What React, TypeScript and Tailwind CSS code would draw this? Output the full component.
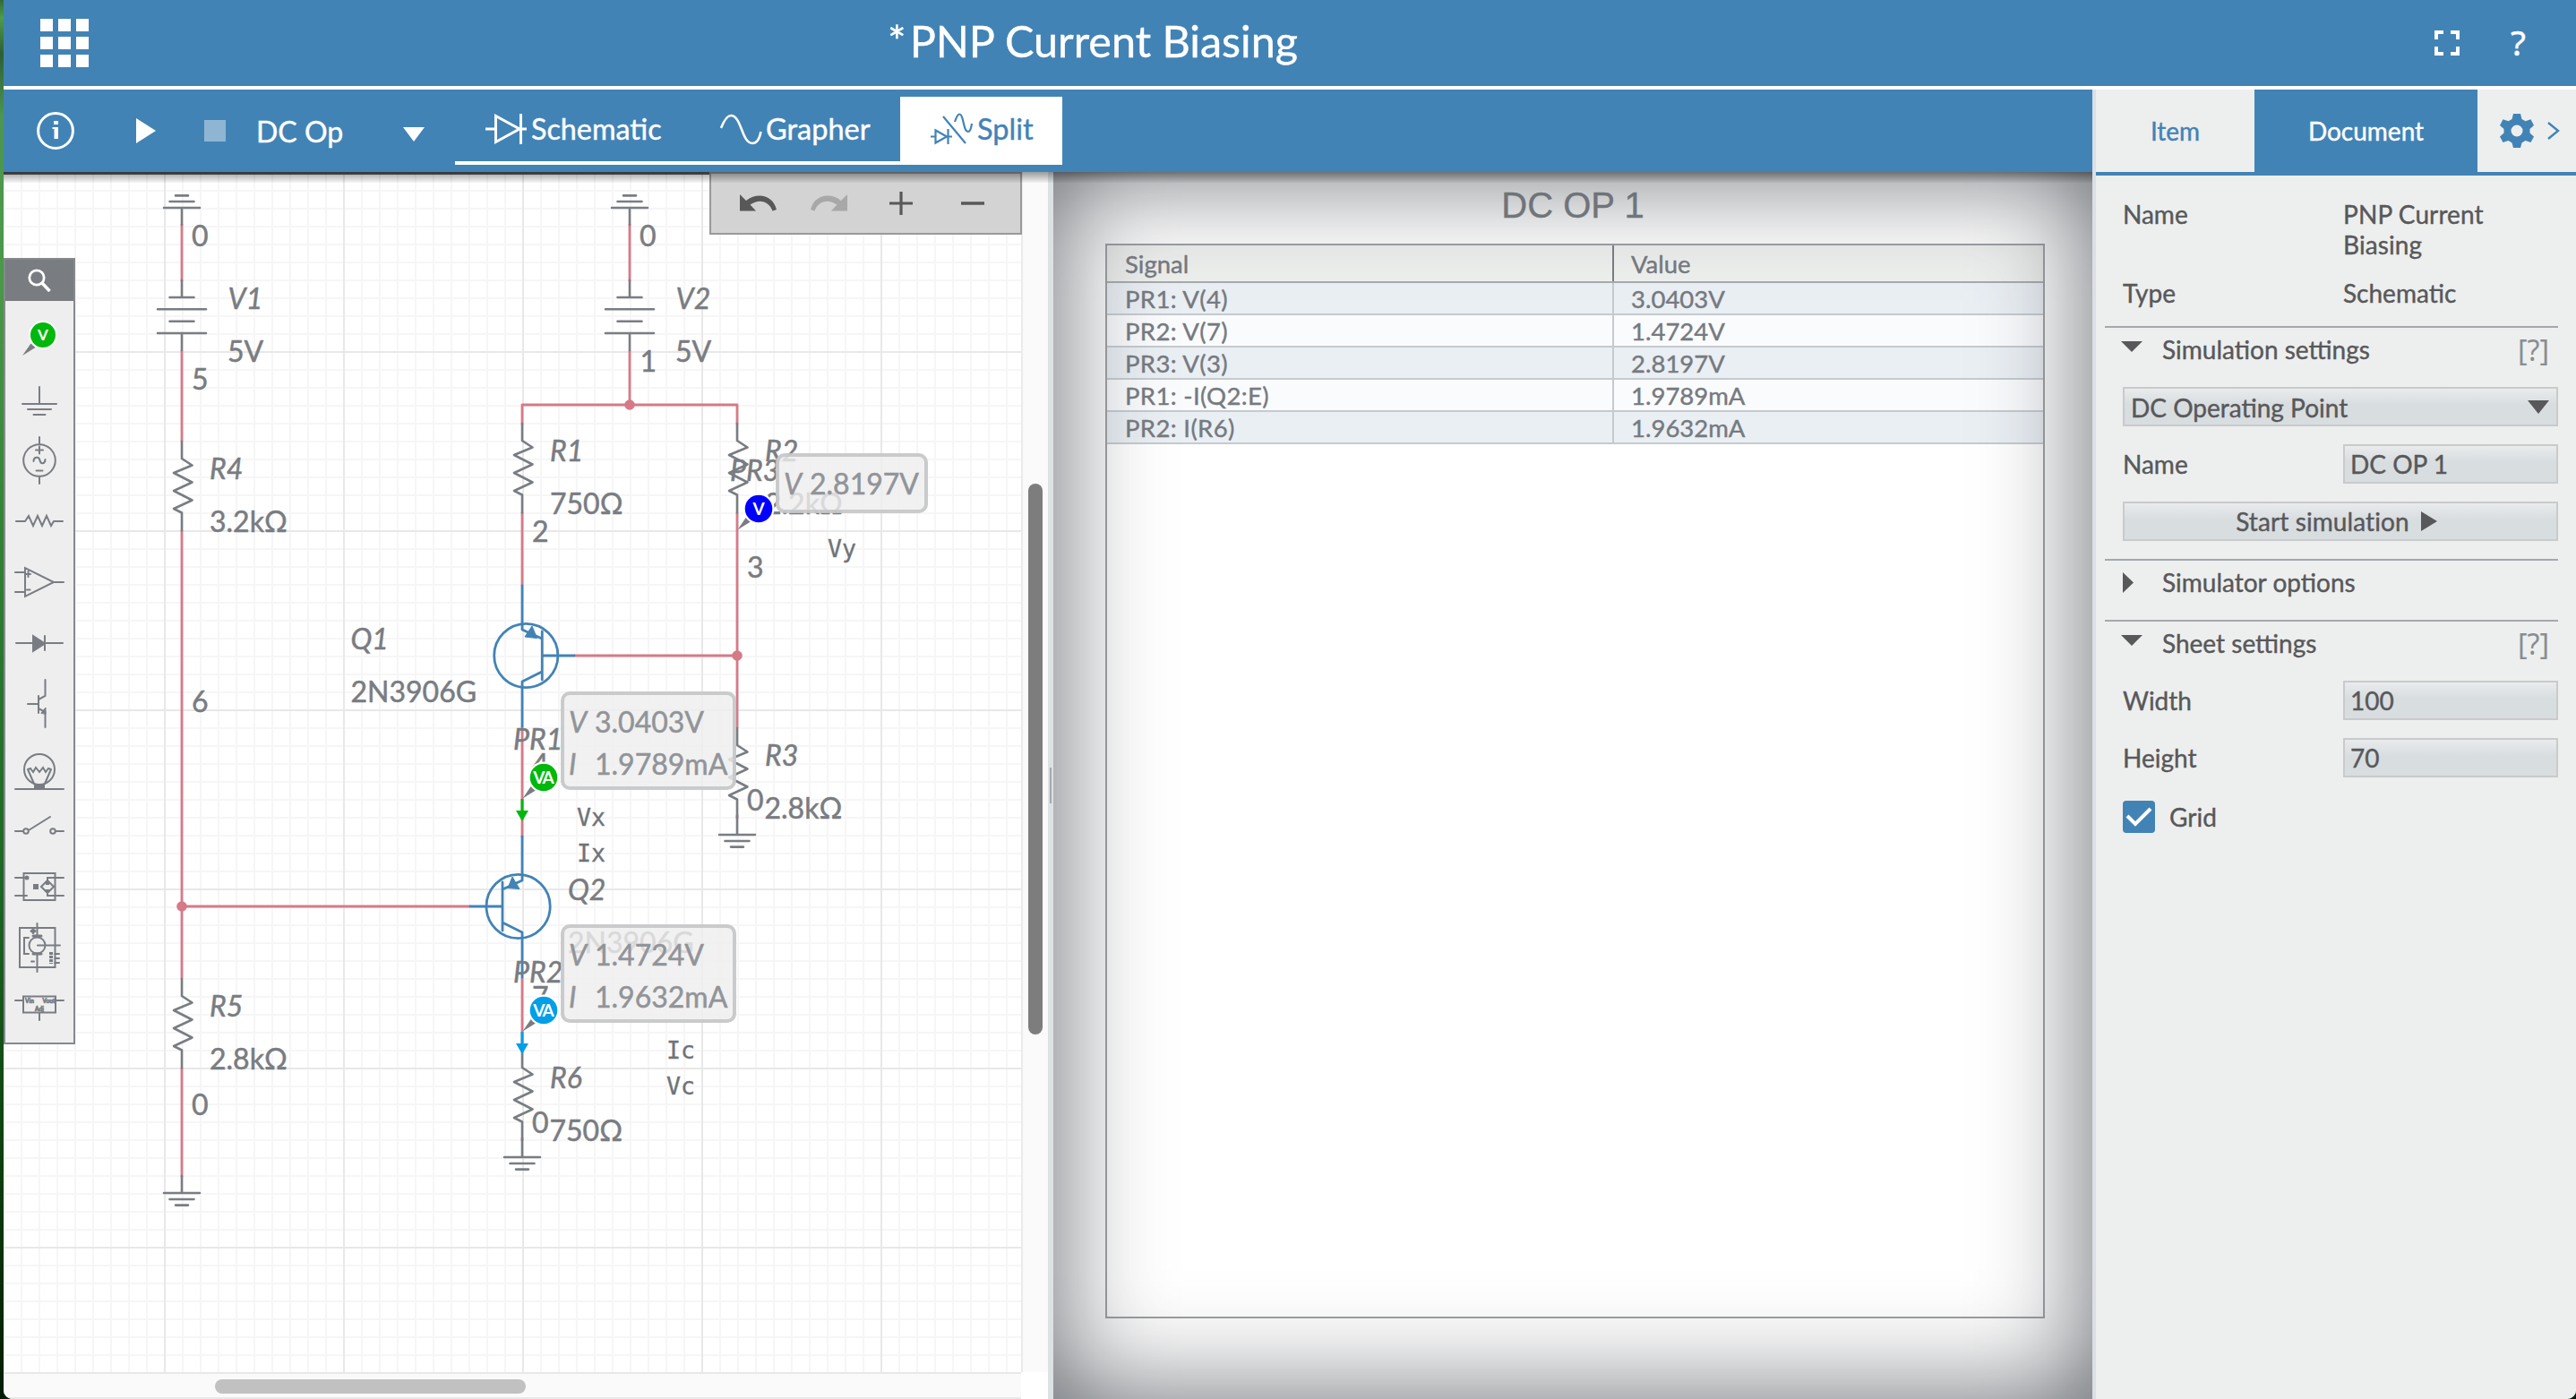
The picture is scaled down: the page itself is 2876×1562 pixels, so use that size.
import React from "react";

const WIRE = "#d67a87";
const PART = "#797d83";
const BLUE = "#4283b6";
const LATO = "Lato, sans-serif";

const Line = ({ d, c = PART, w = 2.6 }: { d: string; c?: string; w?: number }) => (
  <path d={d} stroke={c} strokeWidth={w} fill="none" strokeLinecap="round" strokeLinejoin="round" />
);

const Wire = ({ d }: { d: string }) => (
  <path d={d} stroke={WIRE} strokeWidth={2.8} fill="none" strokeLinejoin="round" />
);

const Resistor = ({ x, y }: { x: number; y: number }) => (
  <Line
    d={`M${x} ${y}v19l11.5 7.5l-20.5 8.5l20.5 10.5l-20.5 9.5l20.5 10.5l-20.5 9.5l9 4.5v20`}
  />
);

const Ground = ({ x, y, up = false }: { x: number; y: number; up?: boolean }) => {
  const s = up ? -1 : 1;
  return (
    <Line
      d={`M${x} ${y}v${s * 19}M${x - 20} ${y + s * 19}h40M${x - 13.5} ${y + s * 26}h27M${x - 7} ${y + s * 32.6}h14`}
    />
  );
};

const Battery = ({ x }: { x: number }) => (
  <Line
    d={`M${x} 313v19M${x - 13.5} 332h27M${x - 27} 345.3h54M${x - 13.5} 358.7h27M${x - 27} 372h54M${x} 372v19`}
  />
);

const Label = ({
  x,
  y,
  t,
  i = false,
  c = "#797c81",
}: {
  x: number;
  y: number;
  t: string;
  i?: boolean;
  c?: string;
}) => (
  <text
    x={x}
    y={y}
    fill={c}
    stroke={c}
    strokeWidth={0.5}
    className="[font-kerning:none]"
    fontFamily={LATO}
    fontSize={32}
    fontStyle={i ? "italic" : "normal"}
  >
    {t}
  </text>
);

const Note = ({ x, y, t }: { x: number; y: number; t: string }) => (
  <text x={x} y={y} fill="#6f7378" stroke="#6f7378" strokeWidth={0.3} fontFamily="'DejaVu Sans Mono', monospace" fontSize={26.6}>
    {t}
  </text>
);

const Probe = ({ x, y, c, t }: { x: number; y: number; c: string; t: string }) => (
  <g>
    <path d={`M${x - 23.5} ${y + 23.5}l9.5 -14l5 5z`} fill="#797d83" />
    <circle cx={x} cy={y} r={17.5} fill="#fff" />
    <circle cx={x} cy={y} r={15.3} fill={c} />
    <text
      x={t.length > 1 ? x - 1 : x}
      y={y + 7}
      fill="#fff"
      fontFamily={LATO}
      fontWeight={700}
      fontSize={19}
      textAnchor="middle"
      letterSpacing={t.length > 1 ? -2 : 0}
    >
      {t}
    </text>
  </g>
);

const Readout = ({ x, y, w, h, rows }: { x: number; y: number; w: number; h: number; rows: [string, string, number][] }) => (
  <g>
    <rect x={x + 2} y={y + 2} width={w - 4} height={h - 4} rx={8} fill="#eeeeee" fillOpacity={0.82} stroke="#c6c7c8" strokeOpacity={0.92} strokeWidth={4} />
    {rows.map(([k, v, dx], n) => (
      <g key={k}>
        <Label x={x + 9} y={y + 46 + n * 47} t={k} i c="#919498" />
        <Label x={x + dx} y={y + 46 + n * 47} t={v} c="#919498" />
      </g>
    ))}
  </g>
);

const Schematic = () => (
  <svg className="block" width={1136} height={1340} viewBox="4 192 1136 1340">
    <defs>
      <pattern id="minor" x="3" y="12" width="20" height="20" patternUnits="userSpaceOnUse">
        <path d="M0 0h20v2h-18v18h-2z" fill="#f6f6f6" />
      </pattern>
      <pattern id="major" x="183" y="192" width="200" height="200" patternUnits="userSpaceOnUse">
        <path d="M0 0h200v2h-198v198h-2z" fill="#e8e8e8" />
      </pattern>
    </defs>
    <rect x={4} y={192} width={1136} height={1340} fill="url(#minor)" />
    <rect x={4} y={192} width={1136} height={1340} fill="url(#major)" />

    <Wire d="M203 250v64M203 391v102M203 592v501M203 1192v122M203 1012H525" />
    <Wire d="M703 250v64M703 391v61M583 474V452H823V474M583 572v82M823 572v241M641 732H823" />
    <Wire d="M583 811v124M583 1091v82M823 910v4M583 1270v4" />
    <circle cx={203} cy={1012} r={5.8} fill={WIRE} />
    <circle cx={703} cy={452} r={5.8} fill={WIRE} />
    <circle cx={823} cy={732} r={5.8} fill={WIRE} />

    <Ground x={203} y={251} up />
    <Ground x={703} y={251} up />
    <Battery x={203} />
    <Battery x={703} />
    <Resistor x={203} y={493} />
    <Resistor x={203} y={1093} />
    <Resistor x={583} y={473} />
    <Resistor x={823} y={473} />
    <Resistor x={823} y={813} />
    <Resistor x={583} y={1173} />
    <Ground x={203} y={1313} />
    <Ground x={823} y={913} />
    <Ground x={583} y={1273} />

    <g>
      <circle cx={587.3} cy={732} r={35.6} stroke={BLUE} strokeWidth={2.8} fill="none" />
      <Line c={BLUE} w={2.8} d="M583 654V703L605 713M605.3 705V759M605.3 732H641M605 750L583 761V811" />
      <path d="M594 699L586 711L599.5 712.5z" fill={BLUE} stroke={BLUE} />
      <circle cx={578.6} cy={1012} r={35.6} stroke={BLUE} strokeWidth={2.8} fill="none" />
      <Line c={BLUE} w={2.8} d="M583 934V983L561 993M561 985V1039M561 1012H525M561 1030L583 1041V1091" />
      <path d="M572 979L567 991.5L580 992.5z" fill={BLUE} stroke={BLUE} />
    </g>

    <path d="M583 892v15" stroke="#00b80d" strokeWidth={3} />
    <path d="M576 905h14l-7 12z" fill="#00b80d" />
    <path d="M583 1152v15" stroke="#009fe8" strokeWidth={3} />
    <path d="M576 1165h14l-7 12z" fill="#009fe8" />

    <Label x={214} y={274.5} t="0" />
    <Label x={254.5} y={345} t="V1" i />
    <Label x={254} y={404} t="5V" />
    <Label x={214} y={434.5} t="5" />
    <Label x={234} y={535} t="R4" i />
    <Label x={234} y={594} t="3.2kΩ" />
    <Label x={214} y={795} t="6" />
    <Label x={234} y={1134.5} t="R5" i />
    <Label x={234} y={1194} t="2.8kΩ" />
    <Label x={214} y={1244.5} t="0" />
    <Label x={714} y={274.5} t="0" />
    <Label x={754.5} y={345} t="V2" i />
    <Label x={754} y={404} t="5V" />
    <Label x={714.5} y={414.5} t="1" />
    <Label x={614} y={515} t="R1" i />
    <Label x={614} y={574} t="750Ω" />
    <Label x={594} y={605} t="2" />
    <Label x={854} y={515} t="R2" i />
    <Label x={854} y={574} t="2.2kΩ" />
    <Label x={815} y={537} t="PR3" i />
    <Label x={834} y={645} t="3" />
    <Label x={391.5} y={725} t="Q1" i />
    <Label x={391.5} y={784} t="2N3906G" />
    <Label x={573} y={837} t="PR1" i />
    <Label x={594} y={865} t="4" />
    <Label x={634} y={1005} t="Q2" i />
    <Label x={634} y={1064} t="2N3906G" />
    <Label x={573} y={1097} t="PR2" i />
    <Label x={594} y={1125} t="7" />
    <Label x={854} y={855} t="R3" i />
    <Label x={853.5} y={914} t="2.8kΩ" />
    <Label x={834} y={905} t="0" />
    <Label x={614} y={1215} t="R6" i />
    <Label x={613.5} y={1274} t="750Ω" />
    <Label x={594} y={1265} t="0" />
    <Note x={924} y={621.5} t="Vy" />
    <Note x={644} y={922} t="Vx" />
    <Note x={644} y={962} t="Ix" />
    <Note x={744} y={1182} t="Ic" />
    <Note x={744} y={1222} t="Vc" />

    <Probe x={607} y={868} c="#00b80d" t="VA" />
    <Probe x={607} y={1128} c="#009fe8" t="VA" />
    <Probe x={847} y={568} c="#0000ff" t="V" />
    <Readout x={626} y={772} w={196} h={110} rows={[["V", "3.0403V", 38], ["I", "1.9789mA", 38]]} />
    <Readout x={626} y={1032} w={196} h={110} rows={[["V", "1.4724V", 38], ["I", "1.9632mA", 38]]} />
    <Readout x={866} y={506} w={170} h={67} rows={[["V", "2.8197V", 38]]} />
  </svg>
);

/* Component palette drawings, one strip below the search header */
const Palette = () => (
  <svg width={76} height={828} viewBox="6 336 76 828" fill="none" stroke="#797d83" strokeWidth={2} strokeLinecap="round">
    <path d="M25 397l9.500 -13.500l5 4.500z" fill="#797d83" stroke="none" />
    <circle cx={48} cy={374} r={16} fill="#fff" stroke="none" />
    <circle cx={48} cy={374} r={14} fill="#00b80d" stroke="none" />
    <text x={48} y={380} fill="#fff" stroke="none" fontFamily={LATO} fontWeight={700} fontSize={17} textAnchor="middle">V</text>
    <path d="M44 432v18M25 451h38M31 457h26M37.500 463h13" />
    <circle cx={44} cy={514} r={17.800} />
    <path d="M44 488v8M44 532v8M44 498.500v8M40 502.500h8M40.500 525.500h7M37.500 515c0-5 6-6 7-1s6 4 6-1" />
    <path d="M18 582h10l4-6l5 11l5-11l5 11l5-11l5 11l3-5h10" />
    <path d="M28 634v32l32-16zM17 639h11M17 661h11M60 650h11M31.500 638v6M29 641h5M30 658.500h3.500" />
    <path d="M18 718h52M50 710v16" />
    <path d="M37 710v17l13-8.500z" fill="#797d83" />
    <path d="M31 786h12M43 777v19M43 781l7.500-4V759M43 791l7.500 4V812" />
    <path d="M46 796l5-6v7z" fill="#797d83" strokeWidth={1} />
    <circle cx={44} cy={859} r={17} />
    <path d="M17 881h54M31 859l7 16M57 859l-7 16M31 859l3-1l3 4l3-5l4 5l4-5l3 5l3-4l3 1" />
    <path d="M38 875h12v6h-12z" fill="#797d83" stroke="none" />
    <path d="M17 928h9M32 927l24-15M62 928h9" />
    <circle cx={29} cy={928} r={2.800} />
    <circle cx={59} cy={928} r={2.800} />
    <path d="M26.500 975h35v30h-35zM17 980h13M17 1000h13M71 980H53v4M71 1000H53v-4M53 983l7 7l-7 7l-7-7z" />
    <path d="M37 987h6v6h-6zM51 984h4v4h-4zM50 993h6v2h-6z" fill="#797d83" stroke="none" />
    <circle cx={30} cy={980} r={1.500} fill="#797d83" />
    <path d="M22 1036h39.500v44H22zM41.500 1031v14M41.500 1066v19M42 1055.500h25M32 1047h-5v18h5M61 1065h5M61 1070h5M61 1075h5M35 1073.500h3" />
    <circle cx={41.500} cy={1055.500} r={9} />
    <path d="M37 1045h9M37 1065h9M35 1039.500h4M37 1037.500v4" strokeWidth={3} />
    <path d="M57 1063v13" strokeWidth={4} strokeDasharray="3 1" strokeLinecap="butt" />
    <path d="M26 1112.500h36v18H26zM17 1117h9M62 1117h9M44 1131v8" />
    <g fill="#797d83" strokeWidth={0.7} fontFamily={LATO} fontWeight={700} fontSize={6.500}>
      <text x={28} y={1120}>Vin</text>
      <text x={47.500} y={1120}>Vout</text>
      <text x={39} y={1128.500}>Adj</text>
    </g>
  </svg>
);

const Field = ({ children, className = "" }: { children?: React.ReactNode; className?: string }) => (
  <div
    className={`flex h-[44px] items-center border-2 border-[#c9cacb] bg-[linear-gradient(180deg,#e9ebec_0%,#d8dde0_45%,#d8dde0_100%)] pl-[7px] pr-[8px] ${className}`}
  >
    {children}
  </div>
);

const DownTri = ({ h = 12, c = "#58585a" }: { h?: number; c?: string }) => (
  <svg className="block" width={24} height={h} viewBox={`0 0 24 ${h}`}>
    <path d={`M0 0h24L12 ${h}z`} fill={c} />
  </svg>
);

const Help = () => (
  <span className="text-[32px] leading-[50px] text-[#898d91] [-webkit-text-stroke:0px] [font-family:'Noto_Sans',sans-serif]">[?]</span>
);

const SIGNALS = [
  ["PR1: V(4)", "3.0403V"],
  ["PR2: V(7)", "1.4724V"],
  ["PR3: V(3)", "2.8197V"],
  ["PR1: -I(Q2:E)", "1.9789mA"],
  ["PR2: I(R6)", "1.9632mA"],
];

export default function App() {
  return (
    <div className="flex h-[1562px] w-[2876px] overflow-hidden bg-[#04230a] [-webkit-text-stroke:0.4px] [font-family:Lato,sans-serif]">
      <div className="w-[4px] shrink-0 bg-[linear-gradient(180deg,#2f6b35_0px,#4f9a4c_20px,#2c5f34_60px,#4c9650_130px,#4a9a49_300px,#3a8a3c_500px,#2b7a30_700px,#1e6523_1000px,#0c3f0e_1300px,#021c04_1562px)]" />
      <div className="relative flex w-[2872px] flex-col overflow-hidden rounded-b-[10px] bg-white">
        <header className="flex h-[96px] shrink-0 items-center bg-[#4283b6] text-white">
          <div className="ml-[41px] grid w-[54px] grid-cols-3 gap-[6px]">
            {Array.from({ length: 9 }, (_, n) => (
              <div key={n} className="h-[14px] w-[14px] bg-white" />
            ))}
          </div>
          <h1 className="ml-[892px] w-[1727px] whitespace-pre pb-[6px] text-[48.500px] leading-[60px]">
            <span className="mr-[4px]">*</span>PNP Current Biasing
          </h1>
          <svg width={28} height={28} viewBox="0 0 28 28" fill="none" stroke="#fff" strokeWidth={4}>
            <path d="M2 10V2H10M18 2h8v8M26 18v8h-8M10 26H2v-8" />
          </svg>
          <span className="ml-[57px] pb-[2px] text-[39px] leading-[44px] [font-family:'Noto_Sans',sans-serif]">?</span>
        </header>

        <div className="mt-[4px] flex h-[1462px] shrink-0">
          <div className="flex w-[2332px] shrink-0 flex-col">
            <div className="flex h-[92px] shrink-0 items-center bg-[#4283b6] text-[32px] text-white">
              <svg className="ml-[37px]" width={42} height={42} viewBox="0 0 42 42">
                <circle cx={21} cy={21} r={19.400} fill="none" stroke="#fff" strokeWidth={3} />
                <path d="M19 10h5v4h-5zM17.500 17h6.500v13h-4.500v-11h-2z" fill="#fff" />
              </svg>
              <svg className="ml-[69px]" width={22} height={28} viewBox="0 0 22 28">
                <path d="M0 0L22 14L0 28z" fill="#fff" />
              </svg>
              <div className="ml-[54px] h-[24px] w-[24px] bg-[#8fb5d4]" />
              <span className="ml-[34px] w-[164px] pt-[2px]">DC Op</span>
              <div className="pt-[8px]">
                <DownTri h={16} c="#fff" />
              </div>
              <div className="ml-[34px] flex h-[76px] items-stretch">
                <div className="flex w-[261px] items-center border-b-4 border-white pl-[34px]">
                  <svg className="shrink-0" width={46} height={36} viewBox="0 0 46 36" fill="none" stroke="#fff" strokeWidth={3}>
                    <path d="M0 18h11M39 18h7M11.500 3.500v29L38 18zM39.500 1v34" />
                  </svg>
                  <span className="ml-[5px] text-[32.300px]">Schematic</span>
                </div>
                <div className="flex w-[236px] items-center border-b-4 border-white pl-[35px]">
                  <svg className="shrink-0" width={47} height={36} viewBox="0 0 47 36" fill="none" stroke="#fff" strokeWidth={2.600}>
                    <path d="M1 17C5 7 8 3 12 3c12 0 12 31 24 31c5 0 8-5 9.500-13" />
                  </svg>
                  <span className="ml-[4px] text-[32.500px]">Grapher</span>
                </div>
                <div className="flex w-[181px] items-center bg-white pb-[4px] pl-[34px] text-[#4283b6]">
                  <svg className="shrink-0" width={47} height={36} viewBox="0 0 47 36" fill="none" stroke="#4283b6" strokeWidth={2.200}>
                    <path d="M0 26.500h6M18 26.500h6M5.500 19.500v14L18 26.500zM19.500 18v17M14 4l25 30M27 10C31-2 34 0 36 8c2 9 3 13 6 13c2 0 3-2 4-9" />
                  </svg>
                  <span className="ml-[5px] text-[32.500px]">Split</span>
                </div>
              </div>
            </div>

            <div className="relative flex h-[1370px]">
              <div className="flex w-[1166px] shrink-0 flex-col">
                <div className="flex h-[1340px]">
                  <div className="w-[1136px] bg-white [-webkit-text-stroke:initial]">
                    <Schematic />
                  </div>
                  <div className="w-[30px] border-l-2 border-[#ebebeb] bg-[#fafafa] pl-[6px] pt-[348px]">
                    <div className="h-[615px] w-[16px] rounded-full bg-[#7d7d7d]" />
                  </div>
                </div>
                <div className="h-[30px] w-[1136px] border-y-2 border-[#e8e8e8] bg-[#fafafa] pl-[236px] pt-[6px]">
                  <div className="h-[16px] w-[347px] rounded-full bg-[#c1c1c1]" />
                </div>
              </div>
              <div className="flex w-[6px] shrink-0 items-center justify-center bg-[#dce1e4]">
                <div className="h-[40px] w-[2px] bg-[#a5a9ad]" />
              </div>

              <section className="relative flex w-[1160px] flex-col bg-[#fdfdfd] text-[#767a7f]">
                <h2 className="mt-[13px] text-center text-[40px] leading-[48px] [font-family:'Liberation_Sans',sans-serif]">DC OP 1</h2>
                <div className="ml-[58px] mt-[19px] h-[1200px] w-[1049px] border-2 border-[#9b9fa3] bg-white text-[27.500px]">
                  <div className="flex h-[42px] border-b-2 border-[#a6aaae] bg-[#eef0ee]">
                    <div className="flex w-[566px] items-center border-r-2 border-[#797d82] pl-[20px] pt-[1px]">Signal</div>
                    <div className="flex items-center pl-[19px] pt-[1px]">Value</div>
                  </div>
                  {SIGNALS.map(([s, v], n) => (
                    <div key={s} className={`flex h-[36px] border-b-2 border-[#c5cacf] ${n % 2 ? "bg-[#fafbfd]" : "bg-[#eaeff4]"}`}>
                      <div className="flex w-[566px] items-center border-r-2 border-[#c5cacf] pl-[20px] pt-[1px] tracking-[0.35px]">{s}</div>
                      <div className="flex items-center pl-[19px] pt-[1px]">{v}</div>
                    </div>
                  ))}
                </div>
                <div className="pointer-events-none absolute inset-0 shadow-[inset_0_0_120px_#62666c]" />
              </section>

              <aside className="absolute left-0 top-[96px] w-[80px] border-2 border-[#85898e] bg-[#eeeeee]">
                <div className="flex h-[46px] items-center justify-center bg-[#797c81]">
                  <svg width={26} height={26} viewBox="0 0 26 26" fill="none" stroke="#fff" strokeWidth={2.800}>
                    <circle cx={10} cy={10} r={8.200} />
                    <path d="M16 16l8.500 9" strokeWidth={3.600} />
                  </svg>
                </div>
                <Palette />
              </aside>

              <div className="pointer-events-none absolute left-0 top-0 h-[3px] w-[788px] bg-[#5a5c60]" />
              <div className="absolute left-[788px] top-0 flex h-[70px] w-[349px] items-center border-2 border-[#999999] bg-[#d3d3d3] pl-[32px]">
                <svg width={41} height={20} viewBox="0 0 41 20">
                  <path d="M0 0V18.500H18L11.500 11.500C22 4 33 8 36.500 18.500L41 17C37 1 20-3 7 7z" fill="#585858" />
                </svg>
                <svg className="ml-[38px]" width={41} height={20} viewBox="0 0 41 20">
                  <path d="M41 0V18.500H23L29.500 11.500C19 4 8 8 4.500 18.500L0 17C4 1 21-3 34 7z" fill="#a8a8a8" />
                </svg>
                <svg className="ml-[47px]" width={26} height={26} viewBox="0 0 26 26" stroke="#585858" strokeWidth={3.200}>
                  <path d="M0 13h26M13 0v26" />
                </svg>
                <svg className="ml-[54px]" width={26} height={26} viewBox="0 0 26 26" stroke="#585858" strokeWidth={3.500}>
                  <path d="M0 13h26" />
                </svg>
              </div>
              <div className="pointer-events-none absolute inset-x-0 top-0 h-[12px] bg-[linear-gradient(180deg,rgba(0,0,0,0.38),rgba(0,0,0,0.03))]" />
            </div>
          </div>

          <div className="w-[4px] shrink-0 bg-[#dae0e5]" />

          <aside className="flex w-[536px] flex-col bg-[#edefee] text-[28px] text-[#58585a]">
            <div className="flex h-[96px] border-b-4 border-[#4283b6] text-[#4283b6]">
              <div className="flex w-[177px] items-center justify-center">Item</div>
              <div className="flex w-[249px] items-center justify-center bg-[#4283b6] text-white">Document</div>
              <div className="flex items-center pl-[25px]">
                <svg width={38} height={40} viewBox="0 0 38 40">
                  <path
                    fillRule="evenodd"
                    fill="#4283b6"
                    d="M15 1h8l1.500 6l4 2.300l6-2l3.500 6.700l-4.500 4v4.500l4.500 4l-3.500 6.500l-6-2l-4 2.500L23 39h-8l-1.500-5.500l-4-2.500l-6 2L0 26.500l4.500-4V18L0 14l3.500-6.700l6 2l4-2.300zM19 13.500a6.500 6.500 0 1 0 0 13a6.500 6.500 0 1 0 0-13z"
                  />
                </svg>
                <svg className="ml-[15px]" width={14} height={20} viewBox="0 0 14 20" fill="none" stroke="#4283b6" strokeWidth={2.400}>
                  <path d="M1 1l11 9l-11 9" />
                </svg>
              </div>
            </div>

            <div className="flex flex-col pl-[10px] pr-[20px]">
              <div className="flex pl-[20px] pt-[26px] leading-[34px]">
                <div className="w-[246px]">Name</div>
                <div className="tracking-[0.1px]">
                  PNP Current
                  <br />
                  Biasing
                </div>
              </div>
              <div className="flex h-[74px] pl-[20px] pt-[20px] leading-[34px]">
                <div className="w-[246px]">Type</div>
                <div>Schematic</div>
              </div>

              <div className="flex h-[68px] justify-between border-t-2 border-[#a5a8ac] pl-[18px] pr-[10px]">
                <div className="flex">
                  <div className="w-[46px] pt-[15px]"><DownTri /></div>
                  <div className="leading-[48px]">Simulation settings</div>
                </div>
                <Help />
              </div>
              <Field className="ml-[20px] justify-between">
                <span className="pt-[2px]">DC Operating Point</span>
                <DownTri h={15} />
              </Field>
              <div className="mt-[20px] flex items-center pl-[20px]">
                <div className="w-[246px]">Name</div>
                <Field className="w-[240px]"><span className="-ml-[1px]">DC OP 1</span></Field>
              </div>
              <Field className="ml-[20px] mt-[20px] justify-center">
                <span className="tracking-[0.1px]">Start simulation</span>
                <svg className="ml-[13px] mr-[8px]" width={18} height={22} viewBox="0 0 18 22">
                  <path d="M0 0L18 11L0 22z" fill="#58585a" />
                </svg>
              </Field>

              <div className="mt-[20px] flex h-[68px] border-t-2 border-[#a5a8ac] pl-[20px]">
                <svg className="mt-[13px]" width={12} height={23} viewBox="0 0 12 23">
                  <path d="M0 0L12 11.500L0 23z" fill="#58585a" />
                </svg>
                <div className="ml-[32px] leading-[48px]">Simulator options</div>
              </div>

              <div className="flex h-[68px] justify-between border-t-2 border-[#a5a8ac] pl-[18px] pr-[10px]">
                <div className="flex">
                  <div className="w-[46px] pt-[15px]"><DownTri /></div>
                  <div className="leading-[48px]">Sheet settings</div>
                </div>
                <Help />
              </div>
              <div className="flex items-center pl-[20px]">
                <div className="w-[246px]">Width</div>
                <Field className="w-[240px]"><span className="-ml-[1px]">100</span></Field>
              </div>
              <div className="mt-[20px] flex items-center pl-[20px]">
                <div className="w-[246px]">Height</div>
                <Field className="w-[240px]"><span className="-ml-[1px]">70</span></Field>
              </div>
              <div className="mt-[23px] flex h-[42px] items-center pl-[20px]">
                <div className="flex h-[36px] w-[36px] items-center justify-center rounded-[4px] bg-[#4283b6]">
                  <svg width={30} height={24} viewBox="0 0 30 24" fill="none" stroke="#fff" strokeWidth={4}>
                    <path d="M2 11l9 9L28 3" />
                  </svg>
                </div>
                <span className="ml-[16px]">Grid</span>
              </div>
            </div>
          </aside>
        </div>
      </div>
    </div>
  );
}
